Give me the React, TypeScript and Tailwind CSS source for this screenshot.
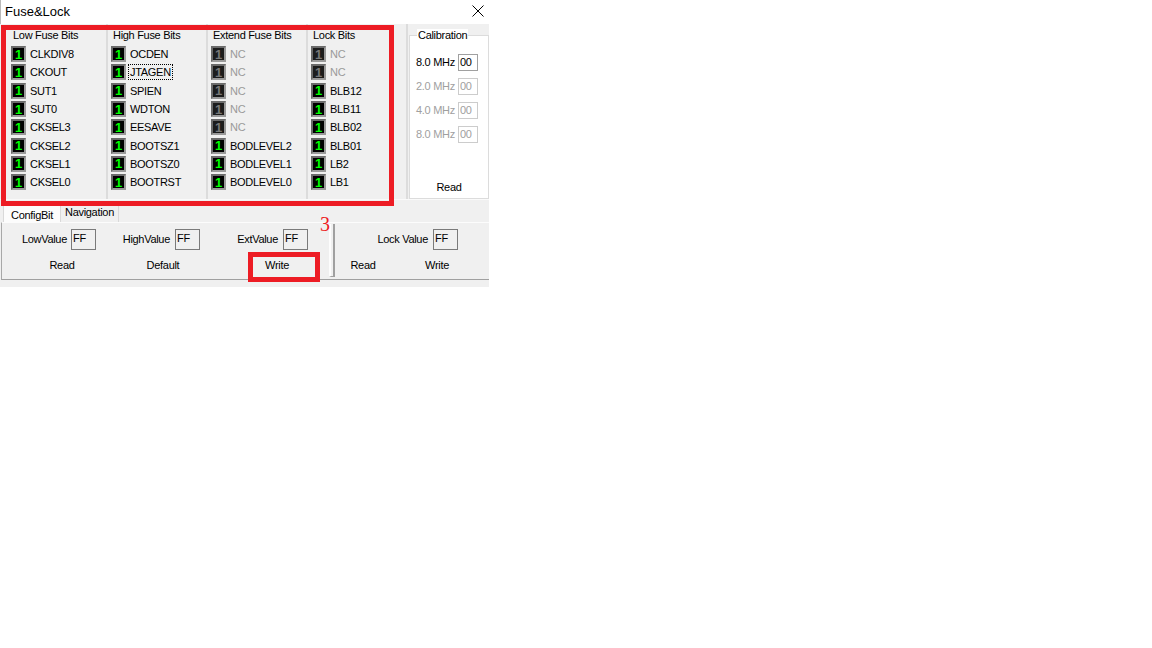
import React from "react";

type Bit = { name: string; off?: boolean; focus?: boolean };

const lowBits: Bit[] = ["CLKDIV8", "CKOUT", "SUT1", "SUT0", "CKSEL3", "CKSEL2", "CKSEL1", "CKSEL0"].map((name) => ({ name }));
const highBits: Bit[] = [
  { name: "OCDEN" },
  { name: "JTAGEN", focus: true },
  { name: "SPIEN" },
  { name: "WDTON" },
  { name: "EESAVE" },
  { name: "BOOTSZ1" },
  { name: "BOOTSZ0" },
  { name: "BOOTRST" },
];
const extBits: Bit[] = [
  { name: "NC", off: true },
  { name: "NC", off: true },
  { name: "NC", off: true },
  { name: "NC", off: true },
  { name: "NC", off: true },
  { name: "BODLEVEL2" },
  { name: "BODLEVEL1" },
  { name: "BODLEVEL0" },
];
const lockBits: Bit[] = [
  { name: "NC", off: true },
  { name: "NC", off: true },
  { name: "BLB12" },
  { name: "BLB11" },
  { name: "BLB02" },
  { name: "BLB01" },
  { name: "LB2" },
  { name: "LB1" },
];

const BitBox = ({ off }: { off?: boolean }) => (
  <div
    className={
      off
        ? "w-[15px] h-[16px] shrink-0 flex items-center justify-center border-2 border-t-[#6b6b6b] border-l-[#6b6b6b] border-b-[#9a9a9a] border-r-[#9a9a9a] bg-[#1c1c1c] text-[#777777] font-bold text-[13px] leading-none"
        : "w-[15px] h-[16px] shrink-0 flex items-center justify-center border-2 border-t-[#6b6b6b] border-l-[#6b6b6b] border-b-[#9a9a9a] border-r-[#9a9a9a] bg-black text-[#00ff00] font-bold text-[13px] leading-none"
    }
  >
    1
  </div>
);

const Column = ({ title, bits }: { title: string; bits: Bit[] }) => (
  <div className="w-[100px] h-full flex flex-col border-r-2 border-[#dcdcdc] pt-[5px]">
    <div className="pl-[5px] text-[11px] leading-[12px]">{title}</div>
    <div className="mt-[4px] flex flex-col pl-[3px]">
      {bits.map((b, i) => (
        <div key={i} className="h-[18.3px] flex items-center gap-[4px]">
          <BitBox off={b.off} />
          {b.focus ? (
            <span className="-ml-[2px] px-[1px] border border-dotted border-black text-[11px] leading-[14px]">{b.name}</span>
          ) : (
            <span className={b.off ? "text-[11px] leading-[12px] text-[#9a9a9a]" : "text-[11px] leading-[12px]"}>{b.name}</span>
          )}
        </div>
      ))}
    </div>
  </div>
);

const CalRow = ({ label, off }: { label: string; off?: boolean }) => (
  <div className="h-[24px] flex items-center">
    <span className={off ? "text-[11px] text-[#a0a0a0]" : "text-[11px]"}>{label}</span>
    <div
      className={
        off
          ? "ml-auto w-[20px] h-[17px] border border-[#cccccc] text-[11px] leading-[15px] pl-[1px] text-[#a0a0a0]"
          : "ml-auto w-[20px] h-[17px] border border-[#a0a0a0] text-[11px] leading-[15px] pl-[1px]"
      }
    >
      00
    </div>
  </div>
);

const ValueBox = () => (
  <div className="w-[25px] h-[21px] border border-[#7a7a7a] text-[11px] leading-[17px] pl-[1px]">FF</div>
);

export default function App() {
  return (
    <div className="w-[1152px] h-[648px] bg-white font-['Liberation_Sans',Arial,sans-serif] text-black tracking-[-0.3px]">
      <div className="relative w-[489px] h-[287px] flex flex-col">
        {/* title bar */}
        <div className="h-[24px] flex items-center justify-between bg-white border-l border-[#b9b9b9] pl-[4px] pr-[5px]">
          <span className="text-[13px] tracking-normal">Fuse&amp;Lock</span>
          <svg width="12" height="12" viewBox="0 0 12 12" className="mb-[2px]">
            <path d="M0.5 0.5 L11.5 11.5 M11.5 0.5 L0.5 11.5" stroke="#000" strokeWidth="1" fill="none" />
          </svg>
        </div>

        <div className="flex-1 flex flex-col bg-[#f0f0f0]">
          {/* bits area */}
          <div className="h-[175px] flex items-start pl-[8px]">
            <Column title="Low Fuse Bits" bits={lowBits} />
            <Column title="High Fuse Bits" bits={highBits} />
            <Column title="Extend Fuse Bits" bits={extBits} />
            <Column title="Lock Bits" bits={lockBits} />
            <div className="ml-[1px] mt-[11px] w-[80px] h-[164px] bg-white border border-[#dcdcdc] flex flex-col pl-[6px] pr-[10px]">
              <span className="-mt-[7px] ml-[1px] self-start bg-white px-[1px] text-[11px] leading-[13px]">Calibration</span>
              <div className="mt-[8px] flex flex-col">
                <CalRow label="8.0 MHz" />
                <CalRow label="2.0 MHz" off />
                <CalRow label="4.0 MHz" off />
                <CalRow label="8.0 MHz" off />
              </div>
              <div className="mt-auto mb-[5px] -mr-[4px] text-center text-[11px] leading-[12px]">Read</div>
            </div>
          </div>
          <div className="h-[1px] bg-[#fafafa]" />

          {/* tabs */}
          <div className="mt-[4px] h-[18px] flex items-end pl-[3px]">
            <div className="h-[19px] -mb-[1px] w-[58px] bg-[#fcfcfc] border border-b-0 border-[#d9d9d9] flex items-center justify-center pt-[2px] text-[11px] leading-[12px]">
              ConfigBit
            </div>
            <div className="h-[18px] w-[58px] border border-l-0 border-b-0 border-[#d9d9d9] flex items-start justify-center pt-[1px] text-[11px] leading-[12px]">
              Navigation
            </div>
          </div>

          {/* tab panel */}
          <div className="h-[58px] flex border-t border-l border-t-[#fcfcfc] border-l-[#a8a8a8] border-b border-b-[#a0a0a0] ml-[1px]">
            <div className="w-[327px] flex flex-col pt-[6px]">
              <div className="flex h-[21px]">
                <div className="w-[94px] flex items-center justify-end gap-[4px]">
                  <span className="text-[11px]">LowValue</span>
                  <ValueBox />
                </div>
                <div className="w-[104px] flex items-center justify-end gap-[5px]">
                  <span className="text-[11px]">HighValue</span>
                  <ValueBox />
                </div>
                <div className="w-[108px] flex items-center justify-end gap-[5px]">
                  <span className="text-[11px]">ExtValue</span>
                  <ValueBox />
                </div>
              </div>
              <div className="mt-[4px] flex h-[22px] items-center text-[11px]">
                <div className="ml-[22px] w-[76px] text-center">Read</div>
                <div className="ml-[25px] w-[76px] text-center">Default</div>
                <div className="ml-[38px] w-[76px] text-center">Write</div>
              </div>
            </div>
            <div className="mt-[1px] mb-[2px] w-[6px] border-l-2 border-l-[#fdfdfd] border-r-2 border-r-[#a0a0a0] border-b border-b-[#a0a0a0]" />
            <div className="flex-1 flex flex-col pt-[6px]">
              <div className="flex h-[21px]">
                <div className="w-[123px] flex items-center justify-end gap-[5px]">
                  <span className="text-[11px]">Lock Value</span>
                  <ValueBox />
                </div>
              </div>
              <div className="mt-[4px] flex h-[22px] items-center text-[11px]">
                <div className="ml-[3px] w-[50px] text-center">Read</div>
                <div className="ml-[24px] w-[50px] text-center">Write</div>
              </div>
            </div>
          </div>
        </div>

        {/* annotations */}
        <div className="absolute left-[1px] top-[25px] w-[393px] h-[181px] border-[5px] border-[#ed1c24]" />
        <div className="absolute left-[248px] top-[252px] w-[72px] h-[30px] border-[5px] border-[#ed1c24]" />
        <span className="absolute left-[320px] top-[213px] text-[20px] leading-[22px] text-[#ed1c24] font-['Liberation_Serif',serif] tracking-normal">
          3
        </span>
      </div>
    </div>
  );
}
